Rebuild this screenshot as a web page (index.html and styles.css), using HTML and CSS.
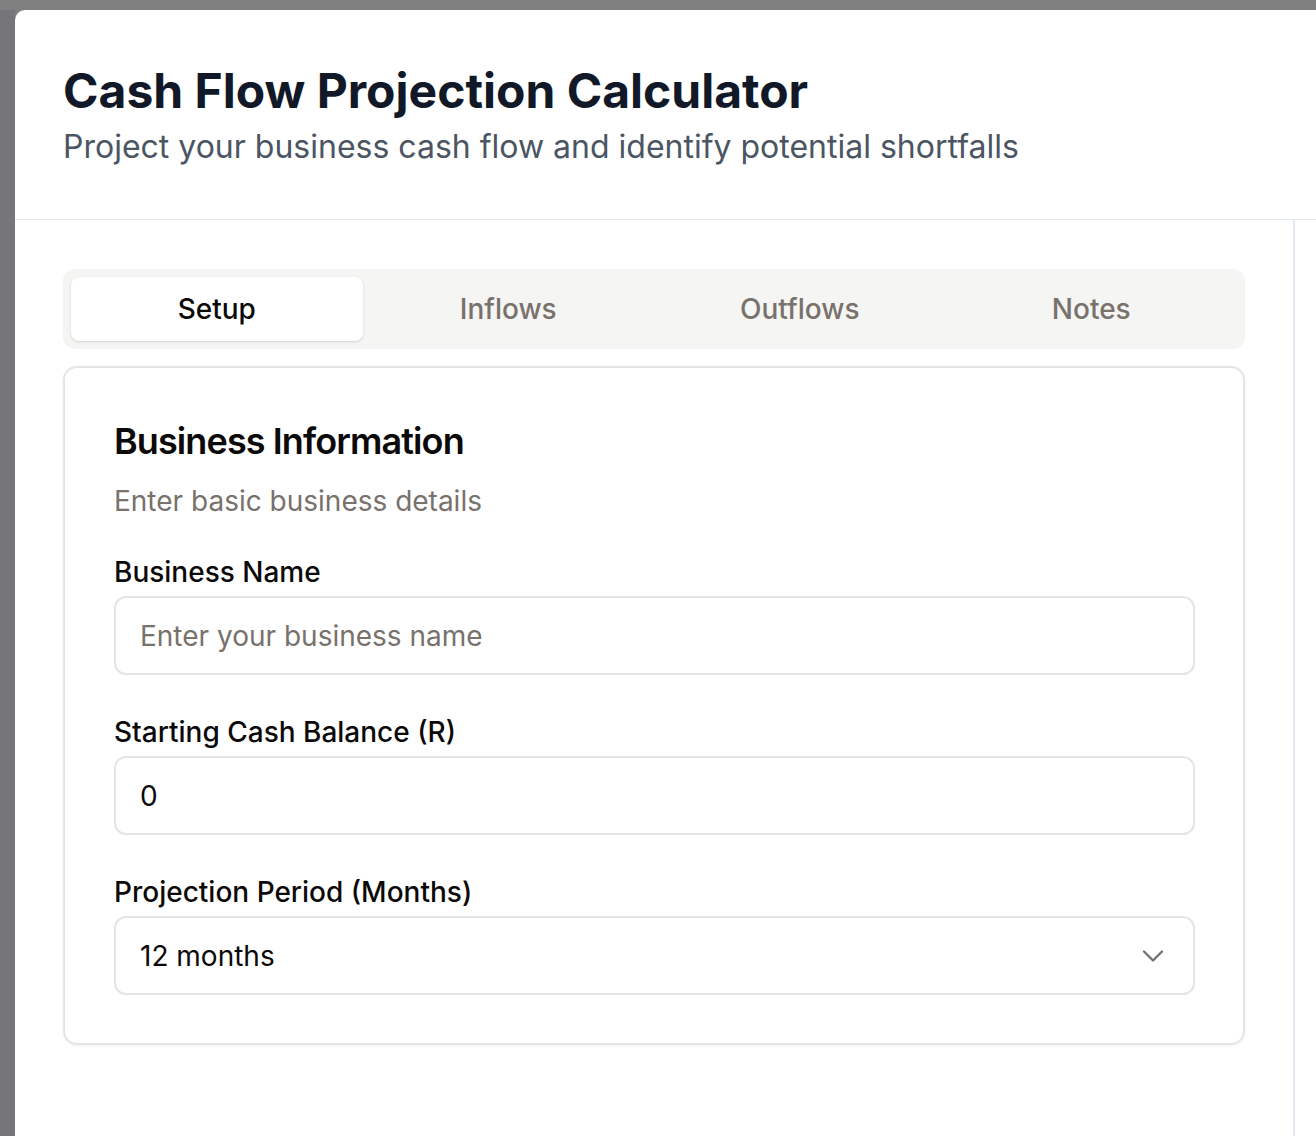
FILE: index.html
```html
<!DOCTYPE html>
<html lang="en">
<head>
<meta charset="utf-8">
<title>Cash Flow Projection Calculator</title>
<link rel="stylesheet" href="styles.css">
</head>
<body>
<div class="page">
  <div class="backdrop-side"></div>
  <div class="modal">
    <header class="modal-header">
      <h1 class="title">Cash Flow Projection Calculator</h1>
      <p class="subtitle">Project your business cash flow and identify potential shortfalls</p>
    </header>
    <div class="modal-body">
      <div class="main">
        <div class="tabs">
          <button class="tab active">Setup</button>
          <button class="tab">Inflows</button>
          <button class="tab">Outflows</button>
          <button class="tab">Notes</button>
        </div>
        <section class="card">
          <h2 class="card-title">Business Information</h2>
          <p class="card-desc">Enter basic business details</p>
          <div class="fields">
            <div class="field">
              <label class="label">Business Name</label>
              <div class="input placeholder">Enter your business name</div>
            </div>
            <div class="field">
              <label class="label">Starting Cash Balance (R)</label>
              <div class="input">0</div>
            </div>
            <div class="field">
              <label class="label">Projection Period (Months)</label>
              <div class="input select">
                <span>12 months</span>
                <svg class="chevron" viewBox="0 0 24 24" fill="none" stroke="currentColor" stroke-width="1.6" stroke-linecap="round" stroke-linejoin="round"><path d="m6 9 6 6 6-6"/></svg>
              </div>
            </div>
          </div>
        </section>
      </div>
      <div class="rail"></div>
    </div>
  </div>
</div>
</body>
</html>
```

FILE: styles.css
```css
* { box-sizing: border-box; }
html, body { margin: 0; padding: 0; }
body {
  background: #808080;
  font-family: Inter, "Noto Sans", sans-serif;
  width: 1316px;
  height: 1136px;
  overflow: hidden;
}
.page {
  display: flex;
  padding-top: 10px;
  height: 1136px;
}
.backdrop-side {
  width: 15px;
  flex: none;
  background: #76767a;
}
.modal {
  flex: 1;
  background: #fff;
  border-top-left-radius: 10px;
  display: flex;
  flex-direction: column;
}
.modal-header {
  padding: 52px 48px 0 48px;
  height: 210px;
  border-bottom: 1px solid #e2e8f0;
}
.title {
  margin: 0;
  font-size: 48px;
  line-height: 57.6px;
  font-weight: 700;
  color: #111827;
}
.subtitle {
  margin: 5px 0 0 0;
  font-size: 32px;
  line-height: 44px;
  color: #4b5563;
}
.modal-body {
  flex: 1;
  display: flex;
}
.main {
  flex: 1;
  padding: 49px 48px 0 48px;
  border-right: 2px solid #e2e8f0;
}
.rail {
  width: 21px;
  flex: none;
}
.tabs {
  display: grid;
  grid-template-columns: repeat(4, 1fr);
  background: #f5f5f4;
  border-radius: 12px;
  padding: 8px;
  height: 80px;
}
.tab {
  border: 0;
  background: transparent;
  font-family: inherit;
  font-size: 28px;
  font-weight: 500;
  color: #78716c;
  border-radius: 8px;
  height: 64px;
  padding: 0;
}
.tab.active {
  background: #fff;
  color: #0c0a09;
  box-shadow: 0 1px 3px rgba(0,0,0,0.1), 0 1px 2px rgba(0,0,0,0.06);
}
.card {
  margin-top: 17px;
  border: 2px solid #e7e5e4;
  border-radius: 14px;
  padding: 51px 48px 48px 49px;
  box-shadow: 0 1px 3px rgba(0,0,0,0.06);
  color: #0c0a09;
}
.card-title {
  margin: 0;
  font-size: 36px;
  line-height: 44px;
  font-weight: 600;
  letter-spacing: -0.9px;
}
.card-desc {
  margin: 18px 0 0 0;
  font-size: 28px;
  line-height: 40px;
  color: #78716c;
}
.fields {
  margin-top: 35px;
  display: flex;
  flex-direction: column;
  gap: 41px;
}
.field {
  display: flex;
  flex-direction: column;
}
.label {
  font-size: 28px;
  line-height: 32px;
  font-weight: 500;
  margin-bottom: 8px;
}
.input {
  height: 79px;
  border: 2px solid #e7e5e4;
  border-radius: 12px;
  padding: 0 22px 0 24px;
  display: flex;
  align-items: center;
  font-size: 28px;
  color: #0c0a09;
}
.input.placeholder { color: #78716c; }
.select { justify-content: space-between; }
.chevron {
  width: 36px;
  height: 36px;
  color: #737373;
}
```
